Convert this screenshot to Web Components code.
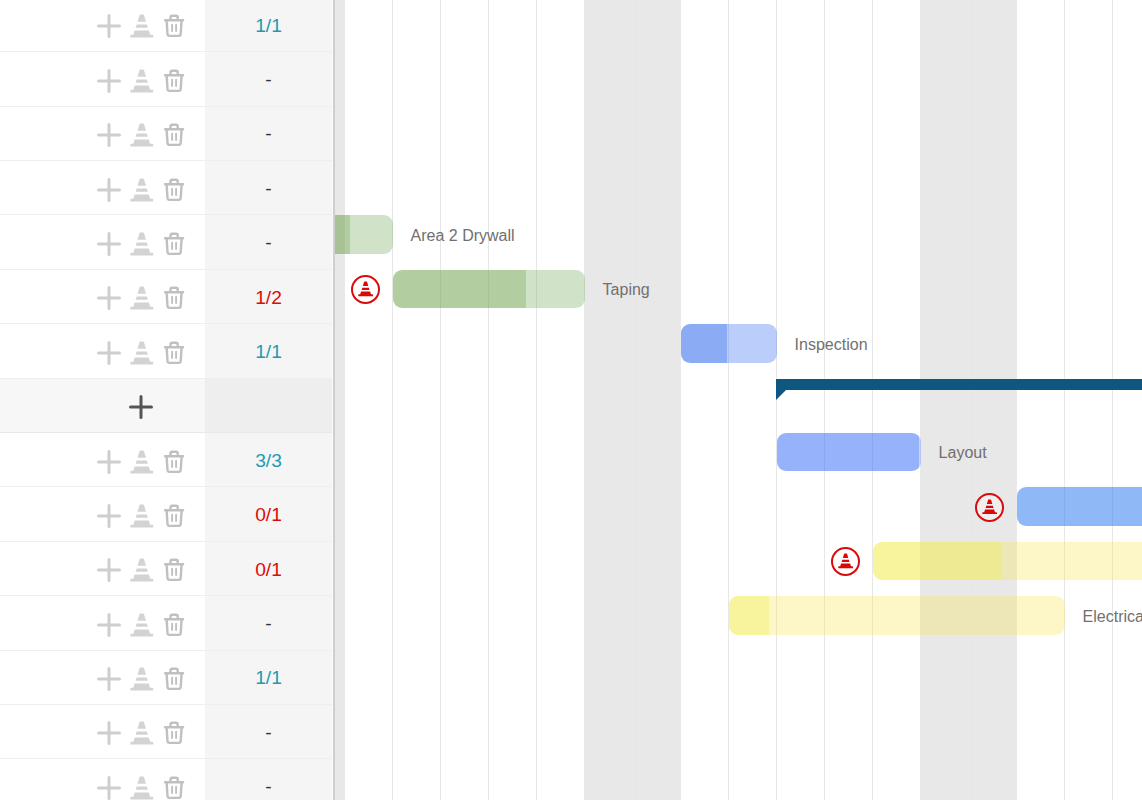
<!DOCTYPE html>
<html lang="en">
<head>
<meta charset="utf-8">
<title>Schedule</title>
<style>
    body {
        margin: 0;
        height: 800px;
        overflow: hidden;
        background: #fff;
        font-family: "Liberation Sans", Arial, sans-serif;
    }
</style>
</head>
<body>
<schedule-app></schedule-app>

<script>
const ICONS = {
    plus: `<path d="M12 1.5v21M1.5 12h21" fill="none" stroke="currentColor" stroke-width="3" stroke-linecap="round"/>`,
    cone: `<path fill="currentColor" d="M10.4.6h2.7q.7 0 .9.7l2 6.5H7.5l2-6.5q.2-.7.9-.7zM6.7 10.4h10.1l1.1 3.4H5.6zM4.7 16.4h14.1l1.3 4.3h2.3q.8 0 .8.8v2.1H.4v-2.1q0-.8.8-.8h2.2z"/>`,
    trash: `<g fill="none" stroke="currentColor" stroke-width="2.4" stroke-linecap="round" stroke-linejoin="round"><path d="M3.1 6.2h18M4.6 6.4l.9 13.6q.1 1.9 2 1.9h9.2q1.9 0 2-1.9l.9-13.6M8.5 5.8V3.4q0-1.6 1.6-1.6h4q1.6 0 1.6 1.6v2.4"/><path d="M10.1 10.7v6.4M14.1 10.7v6.4" stroke-width="1.9"/></g>`
};

const ROWS = [
    { count: "1/1" },
    { count: "-" },
    { count: "-" },
    { count: "-" },
    { count: "-", task: { start: 0, length: 96, done: 53, tone: "green", label: "Area 2 Drywall" } },
    { count: "1/2", task: { start: 96, length: 192, done: 133, tone: "green", label: "Taping", blocked: true } },
    { count: "1/1", task: { start: 384, length: 96, done: 46, tone: "blue", label: "Inspection" } },
    { summary: true, start: 479 },
    { count: "3/3", task: { start: 480, length: 144, done: 142, tone: "indigo", label: "Layout" } },
    { count: "0/1", task: { start: 720, length: 240, done: 240, tone: "sky", blocked: true } },
    { count: "0/1", task: { start: 576, length: 384, done: 129, tone: "yellow", blocked: true } },
    { count: "-", task: { start: 432, length: 336, done: 40, tone: "yellow", label: "Electrical" } },
    { count: "1/1" },
    { count: "-" },
    { count: "-" }
];

// days of the visible range that fall on a weekend
const WEEKEND = [0, 6, 7, 13, 14];
const DAY_COUNT = 18;

class AppIcon extends HTMLElement {
    connectedCallback() {
        this.attachShadow({mode: "open"}).innerHTML = `
        <style>
        :host {
            display: block;
            flex: none;
            width: 24px;
            height: 24px;
        }
        svg {
            display: block;
            width: 100%;
            height: 100%;
        }
        </style>
        <svg viewBox="0 0 24 24">${ICONS[this.getAttribute("name")]}</svg>
        `;
    }
}
customElements.define("app-icon", AppIcon);

class TaskRow extends HTMLElement {
    connectedCallback() {
        const summary = this.hasAttribute("summary");
        this.attachShadow({mode: "open"}).innerHTML = `
        <style>
        :host {
            display: flex;
            flex: none;
            width: 332px;
            height: 54.4px;
        }
        .actions, .count {
            box-sizing: border-box;
            height: 100%;
            display: flex;
            align-items: center;
            border-bottom: 1px solid #eeeeee;
        }
        .actions {
            width: 205px;
            padding: 3.8px 19px 0 0;
            gap: 8.5px;
            justify-content: flex-end;
            color: #cecece;
        }
        .cone {
            color: #d3d3d3;
        }
        .trash {
            color: #c0c0c0;
        }
        .count {
            width: 127px;
            padding-top: 2.4px;
            justify-content: center;
            background: #f5f5f5;
            color: #333;
            font-size: 19.2px;
        }
        :host([state="ok"]) .count {
            color: #1b9cb3;
        }
        :host([state="late"]) .count {
            color: #dd0a0a;
        }
        :host([summary]) .actions {
            padding-right: 52px;
            background: #f7f7f7;
            color: #555;
            border-color: #e8e8e8;
        }
        :host([summary]) .count {
            background: #eeeeee;
            border-color: #e8e8e8;
        }
        </style>
        <div class="actions">
            <app-icon name="plus"></app-icon>
            ${summary ? "" : `<app-icon class="cone" name="cone"></app-icon><app-icon class="trash" name="trash"></app-icon>`}
        </div>
        <div class="count"><slot></slot></div>
        `;
    }
}
customElements.define("task-row", TaskRow);

class DayGrid extends HTMLElement {
    connectedCallback() {
        let days = "";
        for (let i = 0; i < DAY_COUNT; i++) {
            const off = WEEKEND.includes(i);
            const beforeOff = !off && WEEKEND.includes(i + 1);
            days += `<div class="${off ? "off" : ""} ${beforeOff ? "edge" : ""}"></div>`;
        }
        this.attachShadow({mode: "open"}).innerHTML = `
        <style>
        :host {
            display: flex;
            height: 100%;
        }
        div {
            box-sizing: border-box;
            flex: none;
            width: 48px;
            border-right: 1px solid #e7e7e7;
        }
        .off {
            background: #e8e8e8;
            border-color: #eaeaea;
        }
        .edge {
            border-color: #e8e8e8;
        }
        </style>
        ${days}
        `;
    }
}
customElements.define("day-grid", DayGrid);

class GanttBar extends HTMLElement {
    connectedCallback() {
        this.attachShadow({mode: "open"}).innerHTML = `
        <style>
        :host {
            display: flex;
            align-items: center;
            height: 38.4px;
            white-space: nowrap;
            font-size: 16px;
            color: #707070;
        }
        :host([tone="green"]) { --done: rgba(101, 157, 65, .5); --rest: rgba(98, 162, 75, .3); }
        :host([tone="blue"]) { --done: rgba(44, 102, 237, .55); --rest: rgba(58, 112, 244, .35); }
        :host([tone="indigo"]) { --done: rgba(62, 115, 246, .55); --rest: rgba(58, 112, 244, .3); }
        :host([tone="sky"]) { --done: rgba(51, 128, 239, .55); --rest: rgba(51, 128, 239, .3); }
        :host([tone="yellow"]) { --done: rgba(243, 235, 82, .57); --rest: rgba(248, 230, 72, .3); }
        .bar {
            display: flex;
            flex: none;
            width: ${this.getAttribute("length")}px;
            height: 100%;
            border-radius: 9px;
            overflow: hidden;
        }
        .done {
            width: ${this.getAttribute("done")}px;
            background: var(--done);
        }
        .rest {
            flex: 1;
            background: var(--rest);
        }
        .blocked {
            box-sizing: border-box;
            display: flex;
            align-items: center;
            justify-content: center;
            flex: none;
            width: 29px;
            height: 29px;
            margin: 1px 13px 0 -42px;
            border: 2px solid #d80c0c;
            border-radius: 50%;
            background: #fff;
            color: #dd0606;
        }
        :host([tone="sky"]) .blocked {
            background: #efefef;
        }
        .blocked app-icon {
            width: 15.5px;
            height: 15.5px;
            margin-top: -1px;
        }
        .label {
            margin: 2.4px 0 0 17.6px;
        }
        </style>
        ${this.hasAttribute("blocked") ? `<div class="blocked"><app-icon name="cone"></app-icon></div>` : ""}
        <div class="bar"><div class="done"></div><div class="rest"></div></div>
        <div class="label"><slot></slot></div>
        `;
    }
}
customElements.define("gantt-bar", GanttBar);

class GanttSummary extends HTMLElement {
    connectedCallback() {
        this.attachShadow({mode: "open"}).innerHTML = `
        <style>
        :host {
            display: block;
            flex: 1;
            height: 21.4px;
            background: #0f5680;
            clip-path: polygon(0 0, 100% 0, 100% 11.4px, 10px 11.4px, 0 100%);
        }
        </style>
        `;
    }
}
customElements.define("gantt-summary", GanttSummary);

class ScheduleApp extends HTMLElement {
    connectedCallback() {
        this.attachShadow({mode: "open"}).innerHTML = `
        <style>
        :host {
            display: flex;
            height: 800px;
            overflow: hidden;
        }
        .list {
            flex: none;
            width: 333px;
            height: 800px;
            overflow: hidden;
            border-right: 2px solid #cfcfcf;
            background: #fafafa;
        }
        .list task-row:not([summary]) {
            background: #fff;
        }
        .rows {
            display: flex;
            flex-direction: column;
            margin-top: -2.2px;
        }
        .chart {
            flex: 1;
            min-width: 0;
            height: 800px;
            display: grid;
            overflow: hidden;
        }
        /* the first day is scrolled partly out of view */
        .chart > * {
            grid-area: 1 / 1;
            margin-left: -38px;
            min-width: 0;
        }
        .track {
            display: flex;
            flex: none;
            height: 54.4px;
            align-items: flex-start;
        }
        </style>
        <div class="list"><div class="rows">${ROWS.map(this.listRow).join("")}</div></div>
        <div class="chart">
            <day-grid></day-grid>
            <div class="rows">${ROWS.map(this.track).join("")}</div>
        </div>
        `;
    }

    listRow(row) {
        if (row.summary) {
            return `<task-row summary></task-row>`;
        }
        let state = "none";
        if (row.count !== "-") {
            const [done, total] = row.count.split("/");
            state = done === total ? "ok" : "late";
        }
        return `<task-row state="${state}">${row.count}</task-row>`;
    }

    track(row) {
        if (row.summary) {
            return `<div class="track" style="padding-left: ${row.start}px"><gantt-summary></gantt-summary></div>`;
        }
        const t = row.task;
        if (!t) {
            return `<div class="track"></div>`;
        }
        return `<div class="track" style="padding-left: ${t.start}px"><gantt-bar tone="${t.tone}" length="${t.length}" done="${t.done}" ${t.blocked ? "blocked" : ""}>${t.label || ""}</gantt-bar></div>`;
    }
}
customElements.define("schedule-app", ScheduleApp);
</script>
</body>
</html>
